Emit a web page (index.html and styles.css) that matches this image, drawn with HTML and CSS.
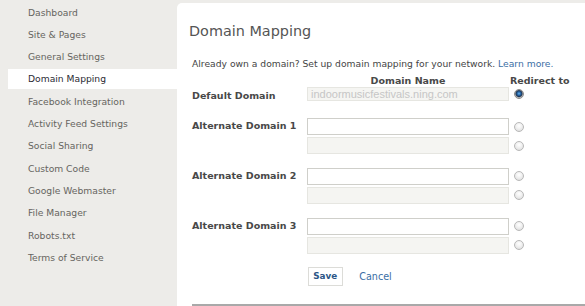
FILE: index.html
```html
<!DOCTYPE html>
<html>
<head>
<meta charset="utf-8">
<link rel="stylesheet" href="styles.css">
</head>
<body>
<div class="page">
  <nav class="sidebar">
    <a class="nav-item">Dashboard</a>
    <a class="nav-item">Site &amp; Pages</a>
    <a class="nav-item">General Settings</a>
    <a class="nav-item active">Domain Mapping</a>
    <a class="nav-item">Facebook Integration</a>
    <a class="nav-item">Activity Feed Settings</a>
    <a class="nav-item">Social Sharing</a>
    <a class="nav-item">Custom Code</a>
    <a class="nav-item">Google Webmaster</a>
    <a class="nav-item">File Manager</a>
    <a class="nav-item">Robots.txt</a>
    <a class="nav-item">Terms of Service</a>
  </nav>
  <main class="panel">
    <h1 class="title">Domain Mapping</h1>
    <p class="intro">Already own a domain? Set up domain mapping for your network. <a class="link">Learn more.</a></p>
    <div class="form">
      <div class="head-row">
        <span class="label"></span>
        <span class="col-name">Domain Name</span>
        <span class="col-redirect">Redirect to</span>
      </div>
      <div class="group group-default">
        <div class="label">Default Domain</div>
        <div class="fields">
          <div class="field"><input class="text disabled" type="text" value="indoormusicfestivals.ning.com" disabled><input class="radio" type="radio" name="r" checked></div>
        </div>
      </div>
      <div class="group">
        <div class="label">Alternate Domain 1</div>
        <div class="fields">
          <div class="field"><input class="text" type="text"><input class="radio" type="radio" name="r"></div>
          <div class="field"><input class="text disabled" type="text" disabled><input class="radio" type="radio" name="r"></div>
        </div>
      </div>
      <div class="group">
        <div class="label">Alternate Domain 2</div>
        <div class="fields">
          <div class="field"><input class="text" type="text"><input class="radio" type="radio" name="r"></div>
          <div class="field"><input class="text disabled" type="text" disabled><input class="radio" type="radio" name="r"></div>
        </div>
      </div>
      <div class="group">
        <div class="label">Alternate Domain 3</div>
        <div class="fields">
          <div class="field"><input class="text" type="text"><input class="radio" type="radio" name="r"></div>
          <div class="field"><input class="text disabled" type="text" disabled><input class="radio" type="radio" name="r"></div>
        </div>
      </div>
      <div class="actions">
        <button class="save" type="button">Save</button>
        <a class="cancel">Cancel</a>
      </div>
    </div>
    <hr class="rule">
  </main>
</div>
</body>
</html>
```

FILE: styles.css
```css
* { box-sizing: border-box; }
html, body { margin: 0; padding: 0; }
body {
  background: #edece9;
  font-family: "DejaVu Sans", Verdana, sans-serif;
  width: 585px;
  height: 306px;
  overflow: hidden;
}
.page {
  display: flex;
  align-items: flex-start;
  height: 306px;
}
.sidebar {
  width: 177px;
  flex: none;
  padding-top: 2.5px;
  display: flex;
  flex-direction: column;
}
.nav-item {
  display: block;
  margin-left: 8px;
  height: 20px;
  margin-bottom: 2.34px;
  padding-left: 20px;
  font-size: 9.2px;
  line-height: 20px;
  color: #666460;
  text-decoration: none;
}
.nav-item.active {
  background: #fff;
  color: #2b2a33;
}
.panel {
  flex: 1;
  margin-top: 3px;
  height: 303px;
  background: #fff;
  border-top-left-radius: 5px;
  padding: 18.5px 0 0 15px;
}
.title {
  margin: 0 0 0 -3px;
  font-size: 14.4px;
  line-height: 18px;
  font-weight: normal;
  color: #555;
}
.intro {
  margin: 18px 0 0 0;
  font-size: 9.2px;
  line-height: 12px;
  color: #444;
}
.link, .cancel { color: #3b6ea5; text-decoration: none; }
.form { margin-top: 5.2px; }
.head-row {
  display: flex;
  font-size: 9.5px;
  line-height: 12px;
  font-weight: bold;
  color: #484848;
}
.head-row .label { width: 115px; flex: none; }
.col-name { width: 202px; text-align: center; flex: none; }
.col-redirect { padding-left: 1px; }
.group {
  display: flex;
  margin-top: 13.7px;
}
.group-default { margin-top: 0.3px; }
.group:nth-child(3) { margin-top: 17.3px; }
.label {
  width: 115px;
  flex: none;
  font-size: 9.5px;
  line-height: 16px;
  font-weight: bold;
  color: #484848;
}
.group-default .label {
  height: 14px;
  line-height: 14px;
  padding-top: 2px;
  box-sizing: content-box;
  margin-bottom: -2px;
}
.fields {
  display: flex;
  flex-direction: column;
  gap: 2px;
}
.field {
  display: flex;
  align-items: center;
}
.text {
  width: 202px;
  height: 17px;
  margin: 0;
  border: 1px solid #cfcfca;
  background: #fff;
  padding: 0 3px;
  font-family: "Liberation Sans", Arial, sans-serif;
  font-size: 11px;
  outline: none;
}
.text.disabled {
  background: #f5f5f2;
  border-color: #e6e6e1;
  color: #c6c6c6;
}
.group-default .text { height: 14px; }
.radio {
  appearance: none;
  -webkit-appearance: none;
  width: 10px;
  height: 10px;
  margin: 0 0 0 5px;
  border-radius: 50%;
  border: 1px solid #b8b8b8;
  background: radial-gradient(circle at 50% 35%, #ffffff 0, #f2f2f2 40%, #d8d8d8 100%);
}
.radio:checked {
  border-color: #8a8a8a;
  background: radial-gradient(circle at 50% 45%, #6ab4f0 0, #2b6eaf 1.5px, #1b3558 3px, #9a9a9a 3.8px, #e6e6e6 4.5px);
}
.actions {
  display: flex;
  align-items: center;
  margin-top: 13.3px;
  padding-left: 115.7px;
}
.save {
  width: 35px;
  height: 19px;
  margin: 0;
  padding: 0;
  border: 1px solid #dcdcd8;
  background: #fff;
  font-family: "DejaVu Sans", Verdana, sans-serif;
  font-size: 8.8px;
  font-weight: bold;
  color: #2d5687;
}
.cancel {
  margin-left: 16.6px;
  font-size: 9.6px;
}
.rule {
  margin: 18.3px 0 0 0;
  border: 0;
  border-top: 2px solid #a9a9a9;
  height: 0;
}
```
